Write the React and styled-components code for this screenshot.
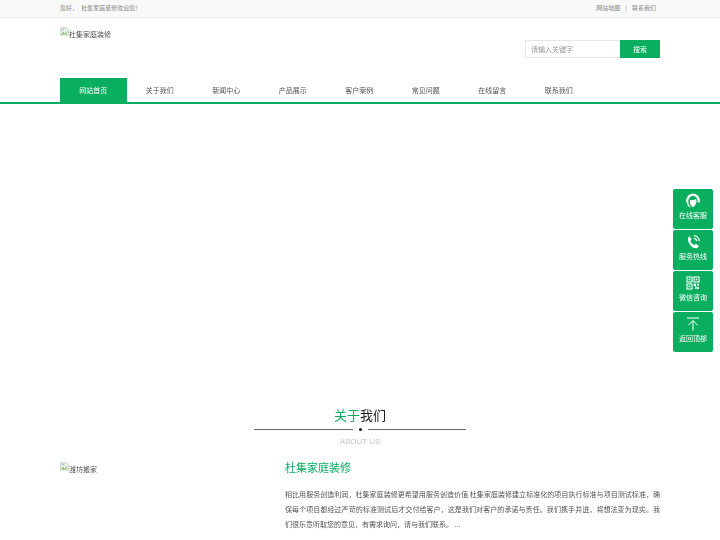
import React from "react";
import styled, { createGlobalStyle } from "styled-components";

const GREEN = "#0aae5f";
const Global = createGlobalStyle`
  html, body { margin: 0; padding: 0; background: #fff; overflow: hidden; }
  body { font-family: "Noto Sans CJK SC", "Liberation Sans", sans-serif; color: #666; }
  * { box-sizing: border-box; }
`;

const Page = styled.div`
  position: relative;
  width: 720px;
  height: 540px;
  overflow: hidden;
  filter: blur(0.3px);
`;
const Wrap = styled.div`
  width: 600px;
  margin: 0 auto;
  display: flex;
`;
const TopBar = styled.div`
  height: 18px;
  background: #f8f8f8;
  border-bottom: 1px solid #eee;
  font-size: 6px;
  line-height: 16px;
  color: #888;
`;
const TopInner = styled(Wrap)`
  justify-content: space-between;
  padding-right: 4px;
`;
const TopWelcome = styled.div`
  word-spacing: 2px;
`;
const TopLinks = styled.div`
  display: flex;
  gap: 5px;
`;
const Header = styled(Wrap)`
  height: 60px;
  justify-content: space-between;
  align-items: flex-start;
`;
const Logo = styled.div`
  display: flex;
  align-items: flex-start;
  margin-top: 9px;
  font-size: 7px;
  line-height: 14px;
  color: #555;
`;
const Search = styled.div`
  display: flex;
  margin-top: 22px;
  height: 18px;
`;
const SearchInput = styled.div`
  width: 95px;
  border: 1px solid #e6e6e6;
  border-right: 0;
  padding-left: 5px;
  font-size: 7px;
  line-height: 16px;
  color: #999;
`;
const SearchButton = styled.div`
  width: 40px;
  background: ${GREEN};
  color: #fff;
  font-size: 7px;
  line-height: 18px;
  text-align: center;
`;
const NavBar = styled.div`
  height: 26px;
  border-bottom: 2px solid ${GREEN};
`;
const Nav = styled(Wrap)``;
const NavItem = styled.div`
  width: 66.5px;
  height: 24px;
  font-size: 7px;
  line-height: 24px;
  text-align: center;
  color: ${(p) => (p.$active ? "#fff" : "#555")};
  background: ${(p) => (p.$active ? GREEN : "transparent")};
`;
const Hero = styled.div`
  height: 302px;
`;
const Heading = styled.div`
  width: 212px;
  margin: 0 auto;
  text-align: center;
`;
const Title = styled.div`
  font-size: 13px;
  line-height: 18px;
  color: #222;
  span { color: ${GREEN}; }
`;
const Rule = styled.div`
  display: flex;
  align-items: center;
  gap: 6px;
  height: 5px;
  margin-top: 3px;
`;
const RuleLine = styled.div`
  flex: 1;
  height: 1px;
  background: #666;
`;
const RuleDot = styled.div`
  width: 3px;
  height: 3px;
  border-radius: 50%;
  background: #111;
`;
const Sub = styled.div`
  margin-top: 3px;
  font-family: "Liberation Sans", sans-serif;
  font-size: 8px;
  line-height: 13px;
  color: #c4c4c4;
`;
const About = styled(Wrap)`
  margin-top: 11px;
`;
const AboutImage = styled.div`
  width: 225px;
  display: flex;
  align-items: flex-start;
  font-size: 7px;
  line-height: 14px;
  color: #555;
  margin-top: 3px;
`;
const AboutBody = styled.div`
  flex: 1;
`;
const AboutTitle = styled.div`
  font-size: 11px;
  line-height: 16px;
  color: ${GREEN};
`;
const AboutText = styled.div`
  margin-top: 12px;
  font-size: 7px;
  line-height: 15px;
  color: #555;
  text-align: justify;
`;
const Side = styled.div`
  position: absolute;
  left: 673px;
  top: 189px;
  display: flex;
  flex-direction: column;
  gap: 1px;
`;
const SideItem = styled.div`
  width: 40px;
  height: 40px;
  border-radius: 2px;
  background: ${GREEN};
  color: #fff;
  font-size: 7px;
  line-height: 10px;
  text-align: center;
  padding-top: 4px;
  svg { display: block; margin: 0 auto 1px; }
`;
const Broken = styled.svg`
  flex: none;
  width: 9px;
  height: 9px;
`;

const BrokenIcon = () => (
  <Broken viewBox="0 0 16 16">
    <path d="M1 1h10l4 4v10H1z" fill="#e8f0e4" stroke="#b5b5b5" />
    <path d="M2 14l4-5 2 2 3-3 3 6z" fill="#5aa845" />
    <rect x="3" y="3" width="4" height="3" fill="#a9c5ee" />
    <path d="M0 16L10 8l6 8z" fill="#fff" opacity="0.5" />
  </Broken>
);

const Svg = ({ children }) => (
  <svg width="16" height="16" viewBox="0 0 24 24" fill="none" stroke="#fff" strokeWidth="2">
    {children}
  </svg>
);

const nav = ["网站首页", "关于我们", "新闻中心", "产品展示", "客户案例", "常见问题", "在线留言", "联系我们"];

const side = [
  {
    label: "在线客服",
    icon: (
      <Svg>
        <path d="M3.5 14C2.5 7 7 2.5 12 2.5S21.5 7 20.5 14" strokeWidth="3.5" />
        <path d="M7.5 10c2.5 1 6.5 1 9-1.5 1 2.5 1 4.5 0 7-1 3-3 5.5-4.5 5.500s-3.5-2.500-4.500-5.500z" fill="#fff" stroke="none" />
        <path d="M4 14c0 3 1 5.500 4 7" strokeWidth="1.8" />
      </Svg>
    ),
  },
  {
    label: "服务热线",
    icon: (
      <Svg>
        <path d="M6.5 3.5l3.5 4.500-2 2.500c1 3 3 5 6 6l2.500-2 4.500 3.500-2.500 3c-2.500 1-6.500 0-9.500-3S3.500 9.500 4.500 6z" fill="#fff" stroke="none" />
        <path d="M13 2.5a8.500 8.500 0 0 1 8.500 8.500M13 6.500a4.500 4.500 0 0 1 4.500 4.500" strokeWidth="1.8" />
      </Svg>
    ),
  },
  {
    label: "微信咨询",
    icon: (
      <Svg>
        <g strokeWidth="1.6">
          <rect x="3" y="3" width="7.5" height="7.5" />
          <rect x="13.5" y="3" width="7.5" height="7.5" />
          <rect x="3" y="13.5" width="7.5" height="7.5" />
        </g>
        <g fill="#fff" stroke="none">
          <rect x="5.5" y="5.5" width="2.5" height="2.5" />
          <rect x="16" y="5.5" width="2.5" height="2.5" />
          <rect x="5.5" y="16" width="2.5" height="2.5" />
          <rect x="13" y="13" width="3.5" height="3.5" />
          <rect x="18" y="13" width="3" height="3" />
          <rect x="15" y="17" width="2.5" height="4" />
          <rect x="18.5" y="18" width="2.5" height="3" />
        </g>
      </Svg>
    ),
  },
  {
    label: "返回顶部",
    icon: (
      <Svg>
        <path d="M3 3h18M12 22V7M5 14l7-7 7 7" strokeWidth="1.5" />
      </Svg>
    ),
  },
];

export default function App() {
  return (
    <Page>
      <Global />
      <TopBar>
        <TopInner>
          <TopWelcome>您好， 杜集家庭装修欢迎您！</TopWelcome>
          <TopLinks>
            <span>网站地图</span>
            <span>|</span>
            <span>联系我们</span>
          </TopLinks>
        </TopInner>
      </TopBar>
      <Header>
        <Logo>
          <BrokenIcon />
          杜集家庭装修
        </Logo>
        <Search>
          <SearchInput>请输入关键字</SearchInput>
          <SearchButton>搜索</SearchButton>
        </Search>
      </Header>
      <NavBar>
        <Nav>
          {nav.map((n, i) => (
            <NavItem key={n} $active={i === 0}>
              {n}
            </NavItem>
          ))}
        </Nav>
      </NavBar>
      <Hero />
      <Heading>
        <Title>
          <span>关于</span>我们
        </Title>
        <Rule>
          <RuleLine />
          <RuleDot />
          <RuleLine />
        </Rule>
        <Sub>ABOUT US</Sub>
      </Heading>
      <About>
        <AboutImage>
          <BrokenIcon />
          潍坊搬家
        </AboutImage>
        <AboutBody>
          <AboutTitle>杜集家庭装修</AboutTitle>
          <AboutText>
            相比用服务创造利润，杜集家庭装修更希望用服务创造价值 杜集家庭装修建立标准化的项目执行标准与项目测试标准，确保每个项目都经过严苛的标准测试后才交付给客户，这是我们对客户的承诺与责任。我们携手并进，将想法变为现实。我们很乐意听取您的意见，有需求询问，请与我们联系。 ...
          </AboutText>
        </AboutBody>
      </About>
      <Side>
        {side.map((s) => (
          <SideItem key={s.label}>
            {s.icon}
            {s.label}
          </SideItem>
        ))}
      </Side>
    </Page>
  );
}
